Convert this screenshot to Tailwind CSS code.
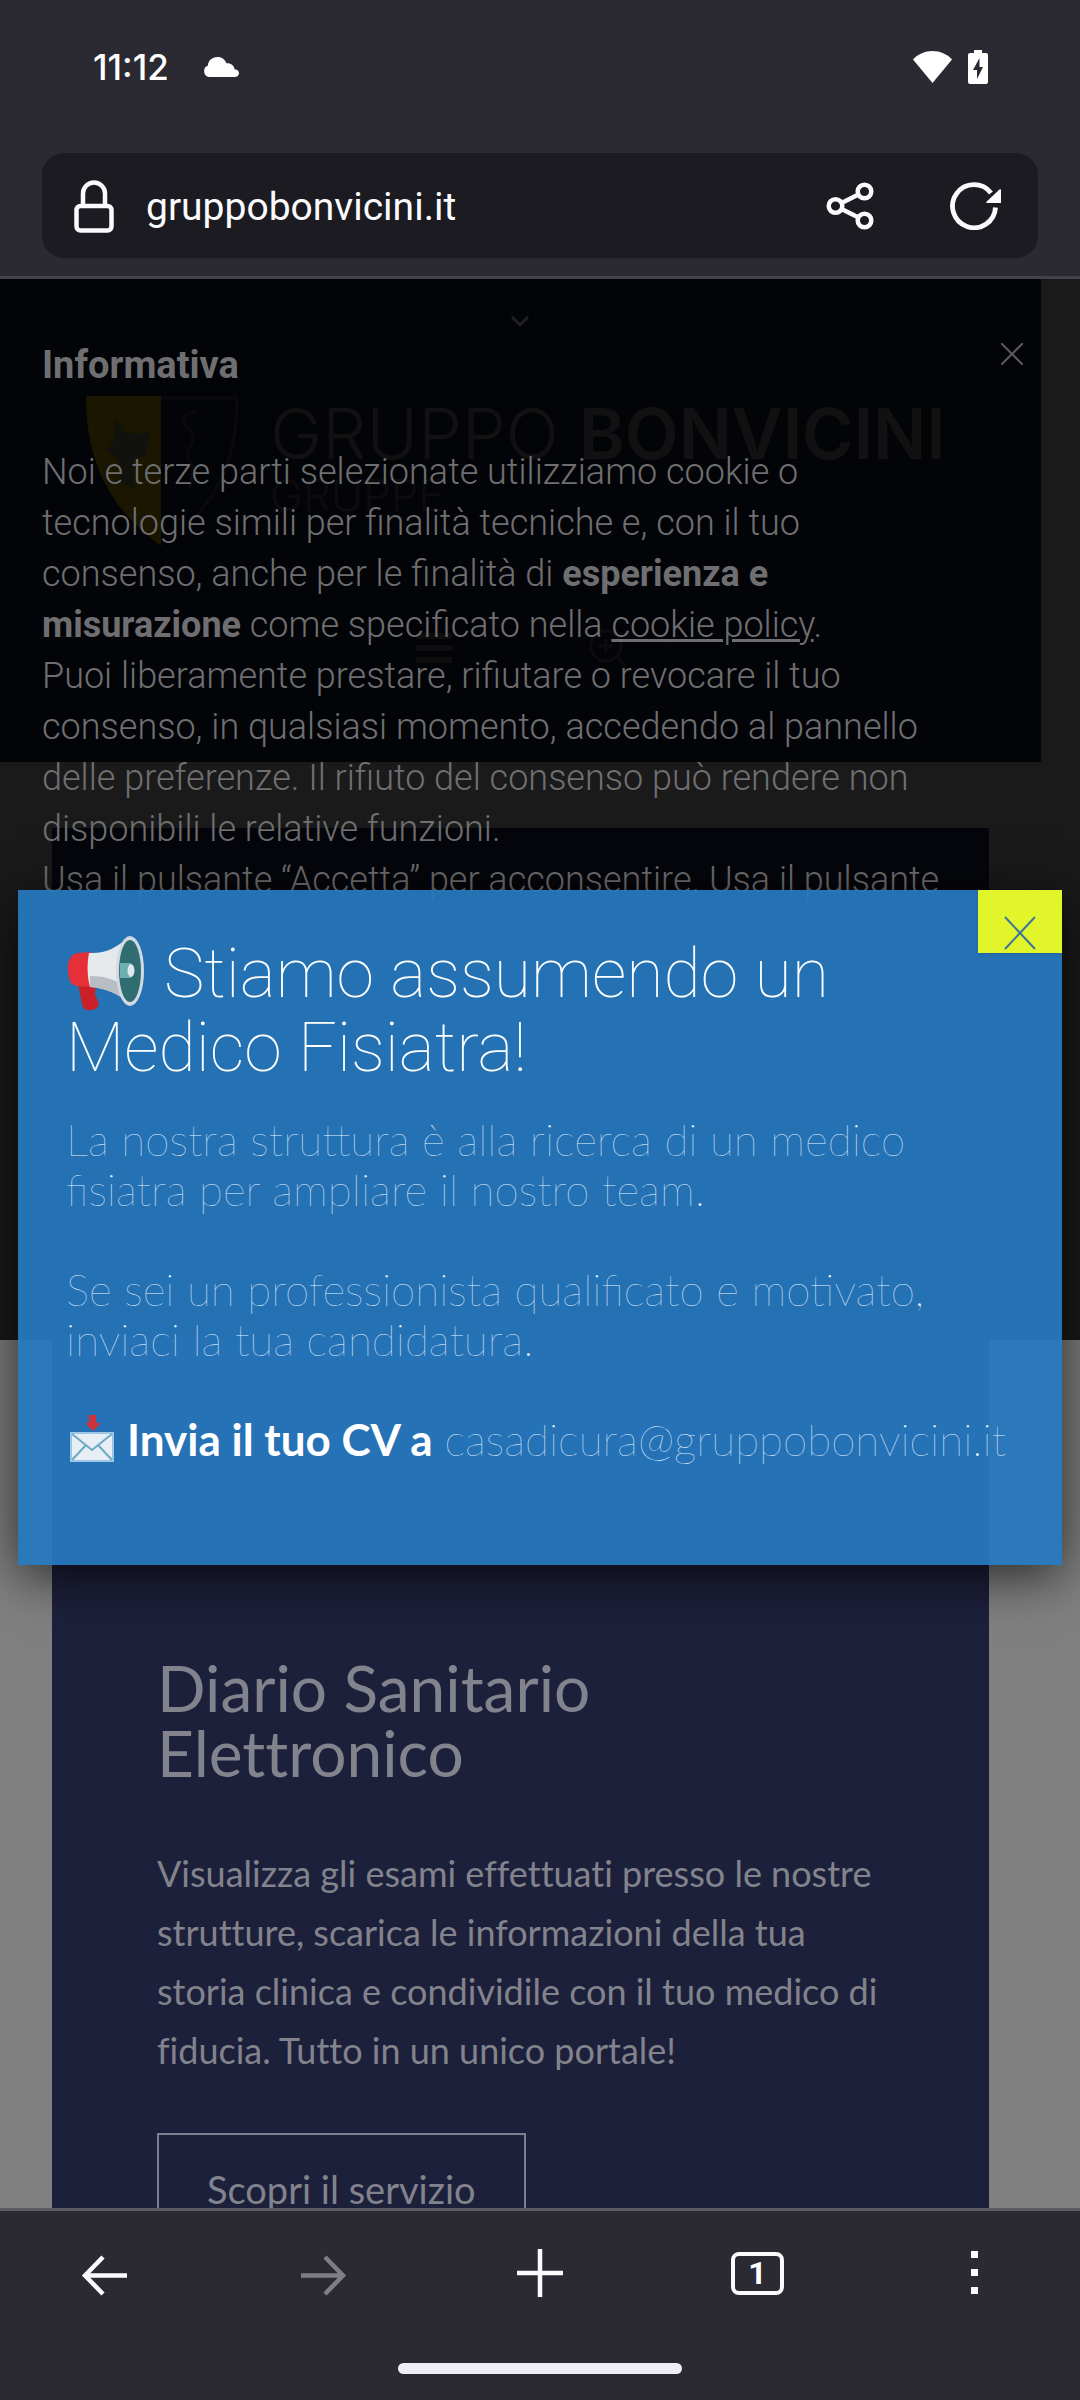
<!DOCTYPE html>
<html lang="it">
<head>
<meta charset="utf-8">
<meta name="viewport" content="width=device-width, initial-scale=1">
<title>gruppobonvicini.it</title>
<script src="https://cdn.jsdelivr.net/npm/@tailwindcss/browser@4"></script>
</head>
<body class="h-screen flex flex-col overflow-hidden bg-[#2b2a33] font-[Roboto,sans-serif] text-white">

<header class="shrink-0 border-b-3 border-[#42414d] pb-[18px]">
  <div class="flex h-[134px] items-center justify-between pl-[93px] pr-[92px]">
    <div class="flex items-center gap-[34px]">
      <span class="font-[Inter,sans-serif] text-[35px] leading-none font-medium">11:12</span>
      <svg class="h-5 w-9" viewBox="0 0 36 20" fill="#fff" aria-hidden="true"><path d="M6 20a6 6 0 0 1-1-11.500C5 4 9 0 14.500 0c4.500 0 7.500 2.600 9 6.300C28 6 31 8.500 31.600 12.200 34.500 12.500 36 14.200 36 16.200 36 18.500 34 20 31.500 20z"/></svg>
    </div>
    <div class="flex items-center gap-4">
      <svg class="h-8 w-[39px]" viewBox="0 0 39 32" fill="#fff" aria-hidden="true"><path d="M19.500 32 0 8.500C5 3 12 0 19.500 0S34 3 39 8.500z"/></svg>
      <svg class="h-[34px] w-5" viewBox="0 0 20 34" aria-hidden="true"><path fill="#fff" d="M6 0h8v3h4a2 2 0 0 1 2 2v27a2 2 0 0 1-2 2H2a2 2 0 0 1-2-2V5a2 2 0 0 1 2-2h4z"/><path fill="#2b2a33" d="M11.500 8 5 20h4v9l6-12h-3.500z"/></svg>
    </div>
  </div>
  <div class="mx-[42px] mt-[19px] flex h-[105px] items-center rounded-[22px] bg-[#1c1b22] pr-9 pl-8">
    <svg class="h-[54px] w-10 shrink-0" viewBox="0 0 40 54" fill="none" stroke="#fbfbfe" stroke-width="4.500" aria-hidden="true"><rect x="2.500" y="27" width="35" height="24.500" rx="4"/><path d="M9 27V14.500a11 11 0 0 1 22 0V27"/></svg>
    <label for="url" class="sr-only">Indirizzo</label>
    <input id="url" type="text" value="gruppobonvicini.it" class="ml-8 min-w-0 flex-1 bg-transparent pt-1 text-[39px] text-[#fbfbfe] outline-none">
    <div class="flex items-center gap-[76px]">
      <button aria-label="Condividi"><svg class="h-12 w-12" viewBox="0 0 48 48" fill="none" stroke="#fbfbfe" stroke-width="4.500" aria-hidden="true"><circle cx="9.500" cy="24" r="6.800"/><circle cx="38.500" cy="9.500" r="6.800"/><circle cx="38.500" cy="38.500" r="6.800"/><path d="M15.500 21 32.500 12.500M15.500 27l17 8.500"/></svg></button>
      <button aria-label="Ricarica"><svg class="h-12 w-[52px]" viewBox="0 0 52 48" aria-hidden="true"><path fill="none" stroke="#fbfbfe" stroke-width="4.800" d="M45.500 25.500A21.500 21.500 0 1 1 41 11"/><path fill="#fbfbfe" d="M49.500 7.500c1-.6 1.500-.3 1.500.6V21H37.500c-1.400 0-1.600-.8-.8-1.600z"/></svg></button>
    </div>
  </div>
</header>

<main class="relative min-h-0 flex-1 overflow-hidden bg-[#808080]">

  <!-- Site page -->
  <div class="mr-[39px] h-[483px] bg-[#0f1428]">
    <div class="flex gap-8 pt-[117px] pl-[86px]">
      <svg class="h-[150px] w-[152px] shrink-0" viewBox="0 0 152 150" aria-hidden="true"><path fill="#807000" d="M0 0h75v150C35 120 0 80 0 0z"/><path fill="#555544" d="m30 22 8 14 26 2-4 22-14 4 2 28-14-6-2-22-12-10 8-8z"/><path fill="none" stroke="#35353c" stroke-width="3" d="M75 2h76c0 60-18 95-45 122M112 16c-12-2-18 8-12 14 10 8 8 16 2 24-4 8 8 14 4 24l-2 14"/></svg>
      <div class="pt-[3px] text-[#55555b]">
        <p class="font-[Inter,sans-serif] text-[70px] leading-[70px] font-light whitespace-nowrap">GRUPPO <b class="font-semibold">BONVICINI</b></p>
        <p class="mt-1 font-[Inter,sans-serif] text-[44px] leading-[44px] font-light text-[#3c3c43]">GRUPPE</p>
      </div>
    </div>
    <div class="ml-[375px] mt-[42px] flex gap-14">
      <button aria-label="Menu" class="flex h-[120px] w-[118px] items-center justify-center border border-[#20243a]"><svg class="h-8 w-9" viewBox="0 0 36 32" fill="#45454c" aria-hidden="true"><path d="M0 1h36v6H0zM0 13h36v6H0zM0 25h36v6H0z"/></svg></button>
      <button aria-label="Cerca" class="flex h-[120px] w-[118px] items-center justify-center border border-[#20243a]"><svg class="h-10 w-10" viewBox="0 0 40 40" fill="none" stroke="#3c3c43" stroke-width="3" aria-hidden="true"><circle cx="18" cy="18" r="15"/><path d="m29 29 9 9M11 18h14M18 11v14"/></svg></button>
    </div>
  </div>

  <article class="mt-[66px] mr-[91px] ml-[52px] h-full bg-[#1d203b] pt-[827px] pr-20 pl-[105px] font-[Lato,sans-serif] text-[#82838c] [font-variant-ligatures:none]">
    <h2 class="text-[64px] leading-[65px]">Diario Sanitario<br>Elettronico</h2>
    <p class="mt-[59px] text-[36px] leading-[59px] whitespace-nowrap">Visualizza gli esami effettuati presso le nostre<br>strutture, scarica le informazioni della tua<br>storia clinica e condividile con il tuo medico di<br>fiducia. Tutto in un unico portale!</p>
    <a href="#servizio" class="mt-[53px] inline-block border-2 border-[#7d7f8e] px-12 py-[26px] text-[38px]">Scopri il servizio</a>
  </article>

  <!-- Cookie notice -->
  <section aria-label="Informativa" class="absolute inset-x-0 top-0 h-[1061px] bg-black/80 px-[42px] pt-[61px] text-[36px] leading-[51px] text-[#6f6f71]">
    <svg class="absolute top-9 left-[510px] h-3 w-5" viewBox="0 0 20 12" fill="none" stroke="#1f2024" stroke-width="3" aria-hidden="true"><path d="m2 2 8 8 8-8"/></svg>
    <button aria-label="Chiudi informativa" class="absolute top-16 right-[57px]"><svg class="h-[22px] w-[22px]" viewBox="0 0 22 22" stroke="#5a5a5d" stroke-width="2" aria-hidden="true"><path d="m0 0 22 22M22 0 0 22"/></svg></button>
    <h2 class="text-[38px] font-bold">Informativa</h2>
    <p class="mt-14 font-light whitespace-nowrap">Noi e terze parti selezionate utilizziamo cookie o<br>tecnologie simili per finalità tecniche e, con il tuo<br>consenso, anche per le finalità di <b class="font-bold">esperienza e<br>misurazione</b> come specificato nella <a href="#cookie" class="underline">cookie policy</a>.<br>Puoi liberamente prestare, rifiutare o revocare il tuo<br>consenso, in qualsiasi momento, accedendo al pannello<br>delle preferenze. Il rifiuto del consenso può rendere non<br>disponibili le relative funzioni.<br>Usa il pulsante “Accetta” per acconsentire. Usa il pulsante</p>
  </section>

  <!-- Recruiting popup -->
  <section role="dialog" aria-labelledby="popup-title" class="absolute inset-x-[18px] top-[611px] h-[675px] bg-[#2677be]/95 pt-[46px] pl-12 shadow-[0_10px_50px_rgba(0,0,0,0.7)]">
    <button aria-label="Chiudi" class="absolute top-0 right-0 flex h-[63px] w-[84px] justify-center bg-[#e2f42a] pt-[26px] shadow"><svg class="h-[34px] w-8" viewBox="0 0 32 34" stroke="#3a75a0" stroke-width="2" aria-hidden="true"><path d="m1 1 30 32M31 1 1 33"/></svg></button>
    <h1 id="popup-title" class="text-[68px] leading-[73px] font-thin">
      <span class="flex items-center gap-5"><svg class="h-[76px] w-[78px]" viewBox="0 0 78 76" aria-hidden="true"><path fill="#c9202a" d="m12 48 4 20c1 6 6 7 10 6 5-1 8-4 6-9l-3-6 1-12z"/><path fill="#e5303a" d="M12 17c-8 1-11 9-10 19s3 13 9 14l14 1V16z"/><path fill="#e6e9ec" d="M23 17c16 1 27-5 40-16v66C53 58 40 52 24 51c-3-11-3-24-1-34z"/><path fill="#b9bec5" d="M24 40c14 0 24 3 34 10l3 16C51 57 38 52 24 51z"/><ellipse cx="64" cy="35" rx="14" ry="35" fill="#d3d9e4"/><ellipse cx="64" cy="35" rx="11" ry="31" fill="#2f6d70"/><path fill="#6cb0b2" d="M54 27h11v15H54z"/><ellipse cx="65" cy="34.500" rx="3.500" ry="6.500" fill="#dceaf0"/></svg>Stiamo assumendo un</span>
      <span class="block">Medico Fisiatra!</span>
    </h1>
    <div class="mt-[29px] font-[Lato,sans-serif] text-[44px] leading-[50px] font-thin whitespace-nowrap text-[#e4f3ff]">
      <p>La nostra struttura è alla ricerca di un medico<br>fisiatra per ampliare il nostro team.</p>
      <p class="mt-[50px]">Se sei un professionista qualificato e motivato,<br>inviaci la tua candidatura.</p>
      <p class="mt-[50px] flex items-center"><svg class="mr-3 ml-[3px] h-12 w-[46px]" viewBox="0 0 46 48" aria-hidden="true"><path fill="#cf333c" d="M20 0h7v8h5l-8 8-8-8h4z"/><path fill="#e8eef6" stroke="#9cc8e8" stroke-width="2" d="M2 18h42v28H2z"/><path fill="none" stroke="#6fa9c4" stroke-width="2" d="m3 19 20 16 20-16M3 45l14-15M43 45 29 30"/></svg><b class="font-bold text-white">Invia il tuo CV a</b><a href="mailto:casadicura@gruppobonvicini.it" class="ml-3">casadicura@gruppobonvicini.it</a></p>
    </div>
  </section>
</main>

<footer class="h-48 shrink-0 border-t-3 border-[#5b5b66]">
  <nav aria-label="Barra del browser" class="flex h-[124px] items-center justify-between px-[73px]">
    <button aria-label="Indietro" class="flex w-16 justify-center"><svg class="h-12 w-12" viewBox="0 0 48 48" fill="none" stroke="#fbfbfe" stroke-width="4.500" aria-hidden="true"><path d="M46 26.500H4M22 8 4 26.500 22 45"/></svg></button>
    <button aria-label="Avanti" disabled class="flex w-16 justify-center"><svg class="h-12 w-12" viewBox="0 0 48 48" fill="none" stroke="#7f7e86" stroke-width="4.500" aria-hidden="true"><path d="M2 26.500h42M26 8l18 18.500L26 45"/></svg></button>
    <button aria-label="Nuova scheda" class="flex w-16 justify-center"><svg class="h-12 w-12" viewBox="0 0 48 48" stroke="#fbfbfe" stroke-width="4.500" aria-hidden="true"><path d="M24 0v48M1 24h46"/></svg></button>
    <button aria-label="Schede aperte" class="flex w-16 justify-center"><span class="flex h-[43px] w-[53px] items-center justify-center rounded-lg border-4 border-[#fbfbfe] text-[32px] leading-none font-bold">1</span></button>
    <button aria-label="Altre opzioni" class="flex w-16 justify-center"><svg class="h-11 w-2" viewBox="0 0 8 44" fill="#fbfbfe" aria-hidden="true"><path d="M0 0h7v7H0zM0 18h7v7H0zM0 36h7v7H0z"/></svg></button>
  </nav>
  <div class="mx-auto mt-7 h-[11px] w-[284px] rounded-full bg-[#f0edf6]"></div>
</footer>
</body>
</html>
